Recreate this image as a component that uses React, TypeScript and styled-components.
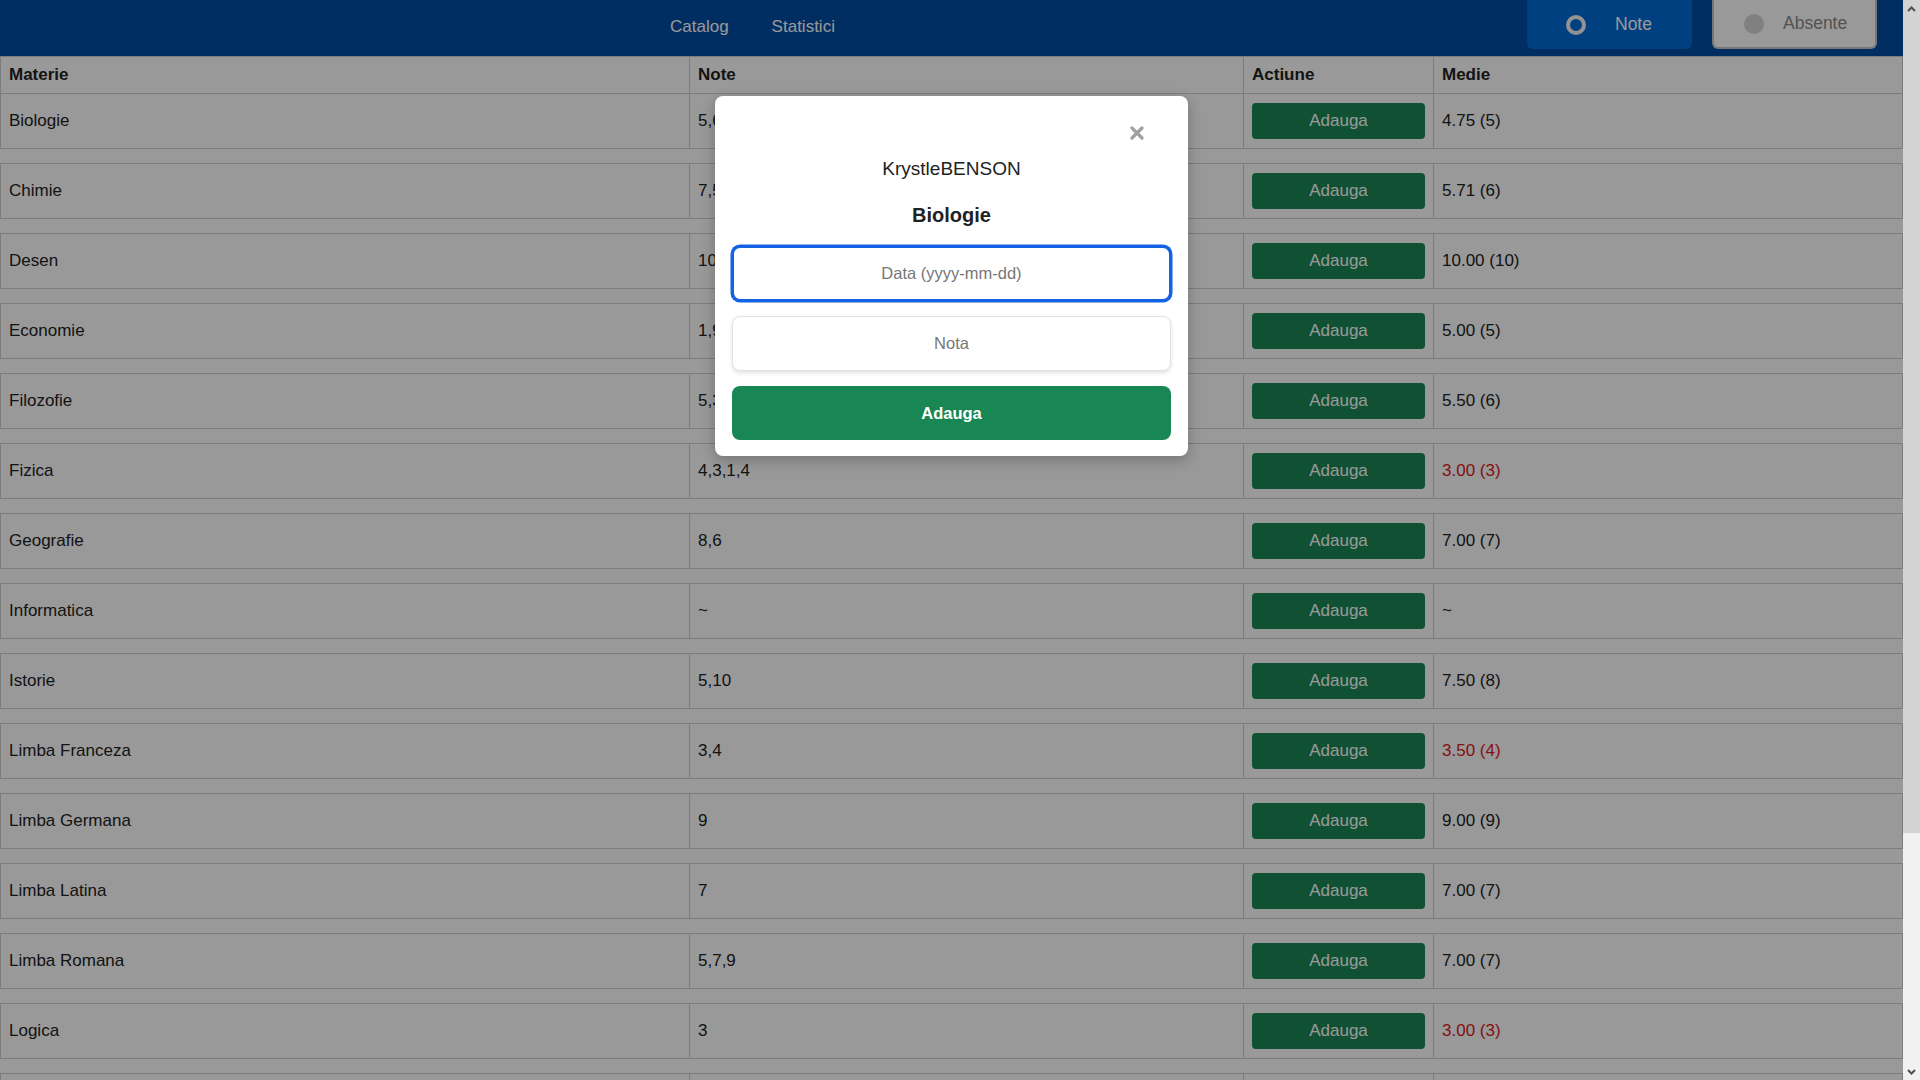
import styled, { createGlobalStyle } from "styled-components";

const GlobalStyle = createGlobalStyle`
  html, body {
    margin: 0;
    padding: 0;
    background: #ffffff;
    font-family: "Liberation Sans", Arial, sans-serif;
    color: #222;
    overflow: hidden;
  }
  * {
    box-sizing: border-box;
  }
`;

type Grade = {
  subject: string;
  notes: string;
  average: string;
  failing?: boolean;
};

const grades: Grade[] = [
  { subject: "Biologie", notes: "5,6,3,5", average: "4.75 (5)" },
  { subject: "Chimie", notes: "7,5,6,4,8,5,5", average: "5.71 (6)" },
  { subject: "Desen", notes: "10", average: "10.00 (10)" },
  { subject: "Economie", notes: "1,9", average: "5.00 (5)" },
  { subject: "Filozofie", notes: "5,3,8,6", average: "5.50 (6)" },
  { subject: "Fizica", notes: "4,3,1,4", average: "3.00 (3)", failing: true },
  { subject: "Geografie", notes: "8,6", average: "7.00 (7)" },
  { subject: "Informatica", notes: "~", average: "~" },
  { subject: "Istorie", notes: "5,10", average: "7.50 (8)" },
  { subject: "Limba Franceza", notes: "3,4", average: "3.50 (4)", failing: true },
  { subject: "Limba Germana", notes: "9", average: "9.00 (9)" },
  { subject: "Limba Latina", notes: "7", average: "7.00 (7)" },
  { subject: "Limba Romana", notes: "5,7,9", average: "7.00 (7)" },
  { subject: "Logica", notes: "3", average: "3.00 (3)", failing: true },
  { subject: "Matematica", notes: "6,8,7", average: "7.00 (7)" },
  { subject: "Muzica", notes: "10,9", average: "9.50 (10)" },
];

/* ---------- page shell with its scroll rail ---------- */

const Shell = styled.div`
  display: flex;
  height: 100vh;
  width: 100vw;
`;

const Viewport = styled.div`
  position: relative;
  flex: 1;
  min-width: 0;
  height: 100%;
  overflow: hidden;
`;

const ScrollRail = styled.div`
  width: 17px;
  flex-shrink: 0;
  height: 100%;
  background: #f1f1f1;
  display: flex;
  flex-direction: column;
`;

const RailArrow = styled.div<{ $onThumb?: boolean }>`
  height: 17px;
  display: flex;
  align-items: center;
  justify-content: center;
  background: ${(p) => (p.$onThumb ? "#d3d3d3" : "#f1f1f1")};
`;

const RailThumb = styled.div`
  height: 816px;
  background: #d3d3d3;
`;

const RailRest = styled.div`
  flex: 1;
`;

/* ---------- top bar ---------- */

const NavBar = styled.nav`
  height: 56px;
  background: #004ba3;
  display: flex;
  align-items: stretch;
`;

const NavLinks = styled.div`
  display: flex;
  align-items: center;
  gap: 43px;
  margin-left: 670px;
  padding-bottom: 2px;
`;

const NavLink = styled.a`
  color: #ffffff;
  font-size: 17px;
  text-decoration: none;
  cursor: pointer;
`;

const ModeSwitch = styled.div`
  margin-left: auto;
  margin-right: 26px;
  display: flex;
  gap: 20px;
  height: 49px;
`;

const ModeButton = styled.button<{ $active?: boolean }>`
  width: 165px;
  height: 49px;
  display: flex;
  align-items: center;
  gap: ${(p) => (p.$active ? "29px" : "19px")};
  padding: 0 0 0 ${(p) => (p.$active ? "39px" : "30px")};
  border-radius: 0 0 6px 6px;
  border: ${(p) => (p.$active ? "none" : "2px solid #c6c6c6")};
  border-top: none;
  background: ${(p) => (p.$active ? "#006bd6" : "#ffffff")};
  color: ${(p) => (p.$active ? "#ffffff" : "#8a8a8a")};
  font-family: "Liberation Sans", Arial, sans-serif;
  font-size: 17.5px;
  cursor: pointer;
`;

const RadioMark = styled.span<{ $active?: boolean }>`
  width: 20px;
  height: 20px;
  border-radius: 50%;
  flex-shrink: 0;
  ${(p) =>
    p.$active
      ? "border: 4px solid #f4f4f4; background: transparent;"
      : "background: #d6d6d6;"}
`;

/* ---------- grades table ---------- */

const Table = styled.table`
  width: 100%;
  border-collapse: collapse;
  font-size: 17px;
`;

const HeadCell = styled.th<{ $width?: number }>`
  text-align: left;
  font-weight: bold;
  height: 37px;
  padding: 0 8px;
  border: 1px solid #cfcfcf;
  width: ${(p) => (p.$width ? `${p.$width}px` : "auto")};
`;

const Cell = styled.td<{ $failing?: boolean }>`
  height: 55px;
  padding: 0 8px;
  border: 1px solid #cfcfcf;
  color: ${(p) => (p.$failing ? "#e01a1a" : "#222")};
`;

const SpacerCell = styled.td`
  height: 15px;
  padding: 0;
  border-top: 1px solid #cfcfcf;
  border-bottom: 1px solid #cfcfcf;
`;

const AddButton = styled.button`
  width: 173px;
  height: 36px;
  border: none;
  border-radius: 4px;
  background: #198754;
  color: #ffffff;
  font-family: "Liberation Sans", Arial, sans-serif;
  font-size: 17px;
  cursor: pointer;
`;

/* ---------- modal ---------- */

const Backdrop = styled.div`
  position: absolute;
  top: 0;
  left: 0;
  right: 0;
  bottom: 0;
  background: rgba(0, 0, 0, 0.4);
  display: flex;
  justify-content: center;
  align-items: flex-start;
  padding-top: 96px;
`;

const Dialog = styled.div`
  position: relative;
  width: 473px;
  background: #ffffff;
  border-radius: 8px;
  box-shadow: 0 4px 14px rgba(0, 0, 0, 0.25);
  padding: 62px 16px 16px;
  display: flex;
  flex-direction: column;
  align-items: stretch;
`;

const CloseButton = styled.button`
  position: absolute;
  top: 28px;
  right: 42px;
  width: 18px;
  height: 18px;
  padding: 0;
  border: none;
  background: transparent;
  cursor: pointer;
  display: flex;
  align-items: center;
  justify-content: center;
`;

const StudentName = styled.div`
  text-align: center;
  font-size: 19px;
  color: #222;
  line-height: 22px;
`;

const SubjectTitle = styled.div`
  text-align: center;
  font-size: 20px;
  font-weight: bold;
  color: #222;
  margin-top: 24px;
  line-height: 22px;
`;

const Field = styled.input<{ $focused?: boolean }>`
  display: block;
  width: 100%;
  height: 55px;
  margin: 0;
  border-radius: 8px;
  text-align: center;
  font-family: "Liberation Sans", Arial, sans-serif;
  font-size: 16.5px;
  color: #222;
  background: #ffffff;
  outline: none;
  ${(p) =>
    p.$focused
      ? "border: 2px solid #1463e6; box-shadow: 0 0 0 1.5px #1463e6;"
      : "border: 1px solid #e2e2e2; box-shadow: 0 2px 4px rgba(0, 0, 0, 0.12);"}
  &::placeholder {
    color: #777;
  }
`;

const FieldStack = styled.div`
  margin-top: 20px;
  display: flex;
  flex-direction: column;
  gap: 15px;
  padding: 0 1px;
`;

const SubmitButton = styled.button`
  height: 54px;
  border: none;
  border-radius: 8px;
  background: #198754;
  color: #ffffff;
  font-family: "Liberation Sans", Arial, sans-serif;
  font-size: 16.5px;
  font-weight: bold;
  cursor: pointer;
`;

function Chevron({ up }: { up?: boolean }) {
  return (
    <svg width="9" height="6" viewBox="0 0 9 6">
      <path
        d={up ? "M1 5 L4.5 1.5 L8 5" : "M1 1 L4.5 4.5 L8 1"}
        fill="none"
        stroke="#505050"
        strokeWidth="2"
      />
    </svg>
  );
}

function App() {
  return (
    <>
      <GlobalStyle />
      <Shell>
        <Viewport>
          <NavBar>
            <NavLinks>
              <NavLink>Catalog</NavLink>
              <NavLink>Statistici</NavLink>
            </NavLinks>
            <ModeSwitch>
              <ModeButton $active>
                <RadioMark $active />
                Note
              </ModeButton>
              <ModeButton>
                <RadioMark />
                Absente
              </ModeButton>
            </ModeSwitch>
          </NavBar>

          <Table>
            <thead>
              <tr>
                <HeadCell $width={689}>Materie</HeadCell>
                <HeadCell $width={554}>Note</HeadCell>
                <HeadCell $width={190}>Actiune</HeadCell>
                <HeadCell>Medie</HeadCell>
              </tr>
            </thead>
            <tbody>
              {grades.map((g) => (
                <GradeRows key={g.subject} grade={g} />
              ))}
            </tbody>
          </Table>

          <Backdrop>
            <Dialog>
              <CloseButton aria-label="close">
                {/* heavy multiplication mark */}
                <svg width="14" height="14" viewBox="0 0 14 14">
                  <path
                    d="M2 2 L12 12 M12 2 L2 12"
                    stroke="#a0a0a0"
                    strokeWidth="3.2"
                    strokeLinecap="round"
                  />
                </svg>
              </CloseButton>
              <StudentName>KrystleBENSON</StudentName>
              <SubjectTitle>Biologie</SubjectTitle>
              <FieldStack>
                <Field $focused placeholder="Data (yyyy-mm-dd)" />
                <Field placeholder="Nota" />
                <SubmitButton>Adauga</SubmitButton>
              </FieldStack>
            </Dialog>
          </Backdrop>
        </Viewport>

        <ScrollRail>
          <RailArrow $onThumb>
            <Chevron up />
          </RailArrow>
          <RailThumb />
          <RailRest />
          <RailArrow>
            <Chevron />
          </RailArrow>
        </ScrollRail>
      </Shell>
    </>
  );
}

function GradeRows({ grade }: { grade: Grade }) {
  return (
    <>
      <tr>
        <Cell>{grade.subject}</Cell>
        <Cell>{grade.notes}</Cell>
        <Cell>
          <AddButton>Adauga</AddButton>
        </Cell>
        <Cell $failing={grade.failing}>{grade.average}</Cell>
      </tr>
      <tr>
        <SpacerCell colSpan={4} />
      </tr>
    </>
  );
}

export default App;
